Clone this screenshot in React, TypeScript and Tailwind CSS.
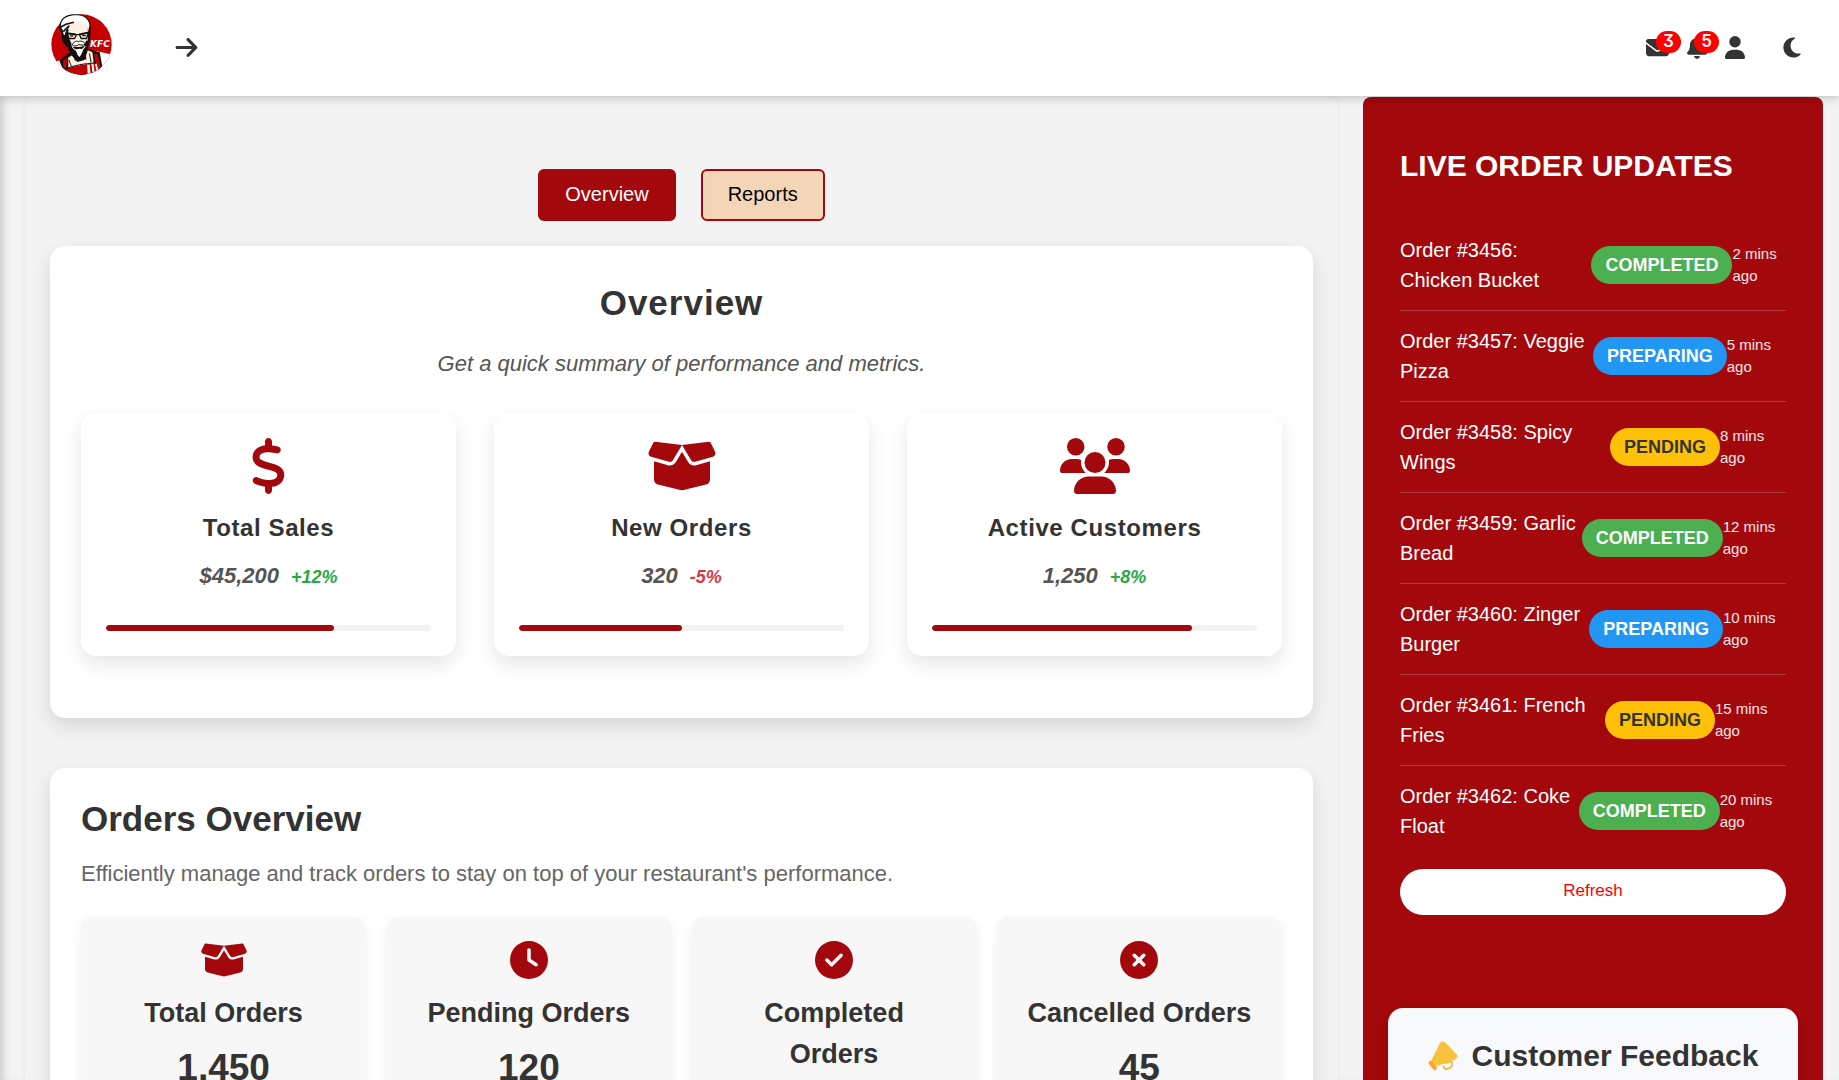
import type { ReactNode } from "react";
import {
  FaArrowRight,
  FaBell,
  FaBoxOpen,
  FaCircleCheck,
  FaCircleXmark,
  FaClock,
  FaDollarSign,
  FaEnvelope,
  FaMoon,
  FaUser,
  FaUsers,
} from "react-icons/fa6";

type Status = "Completed" | "Preparing" | "Pending";

const statusClass: Record<Status, string> = {
  Completed: "bg-[#4caf50] text-white",
  Preparing: "bg-[#2196f3] text-white",
  Pending: "bg-[#ffc107] text-[#333]",
};

const orders: { id: number; item: string; status: Status; ago: number }[] = [
  { id: 3456, item: "Chicken Bucket", status: "Completed", ago: 2 },
  { id: 3457, item: "Veggie Pizza", status: "Preparing", ago: 5 },
  { id: 3458, item: "Spicy Wings", status: "Pending", ago: 8 },
  { id: 3459, item: "Garlic Bread", status: "Completed", ago: 12 },
  { id: 3460, item: "Zinger Burger", status: "Preparing", ago: 10 },
  { id: 3461, item: "French Fries", status: "Pending", ago: 15 },
  { id: 3462, item: "Coke Float", status: "Completed", ago: 20 },
];

const metrics = [
  { title: "Total Sales", value: "$45,200", change: "+12%", progress: 70, icon: FaDollarSign, iconWidth: "w-[35px]" },
  { title: "New Orders", value: "320", change: "-5%", progress: 50, icon: FaBoxOpen, iconWidth: "w-[70px]" },
  { title: "Active Customers", value: "1,250", change: "+8%", progress: 80, icon: FaUsers, iconWidth: "w-[70px]" },
];

const orderStats = [
  { title: "Total Orders", value: "1,450", icon: FaBoxOpen, iconWidth: "w-12" },
  { title: "Pending Orders", value: "120", icon: FaClock, iconWidth: "w-[38px]" },
  { title: "Completed Orders", value: "1,285", icon: FaCircleCheck, iconWidth: "w-[38px]" },
  { title: "Cancelled Orders", value: "45", icon: FaCircleXmark, iconWidth: "w-[38px]" },
];

function Logo() {
  return (
    <svg viewBox="153 41 184 184" className="size-[61px]" role="img" aria-label="KFC">
      <clipPath id="logo-disc">
        <circle cx="245" cy="133" r="91" />
      </clipPath>
      <g clipPath="url(#logo-disc)">
        <rect x="153" y="41" width="184" height="184" fill="#c40000" />
        {/* background cut-outs beside the shoulders */}
        <path d="M153 190 L186 178 L190 214 L160 214 Z" fill="#fff" />
        <path d="M284 152 L337 163 V225 H306 L302 200 Z" fill="#fff" />
        {/* shoulders */}
        <path d="M178 182 L206 158 L262 146 L300 156 L309 206 L296 225 H190 L186 200 Z" fill="#111" />
        <path d="M190 182 L203 172 L198 206 L190 203 Z" fill="#c40000" />
        <path d="M205 172 L216 166 L232 186 L254 180 L264 150 L278 156 L282 190 L205 203 Z" fill="#fff0e2" />
        <path d="M207 180 L214 198 M269 160 L274 188" stroke="#111" strokeWidth="3" />
        <path d="M196 209 C220 198 256 192 287 191 L283 161 L294 163 L303 202 L292 225 H196 Z" fill="#c40000" />
        <path d="M196 207 C220 196 256 190 288 189" stroke="#111" strokeWidth="3" fill="none" />
        <path d="M262 194 L270 193 L272 225 H264 Z M275 192 L281 191 L286 225 H279 Z M286 192 L291 191 L297 218 H291 Z" fill="#fff" />
      </g>
      {/* head outline, hair and face */}
      <path d="M181 66 C188 46 210 40 232 42 C258 42 272 58 272 78 C273 100 272 118 266 136 C262 156 250 174 238 176 C222 172 206 160 204 142 C190 134 182 118 185 98 C177 88 177 76 181 66 Z" fill="#111" />
      <path d="M184 68 C190 50 212 44 232 45 C254 45 268 58 269 76 L265 94 L260 76 L214 66 L198 92 L194 106 C188 100 190 94 188 88 C182 82 182 76 184 68 Z" fill="#fff" />
      <path d="M206 72 C218 60 250 60 260 74 C267 90 266 116 260 134 C255 146 246 154 236 156 C224 152 214 142 211 128 L204 112 Z" fill="#fff0e2" />
      <path d="M180 82 L198 72 L222 66 M190 94 L208 76 M196 108 L204 88" stroke="#111" strokeWidth="5" fill="none" />
      <path d="M200 99 L228 103 M238 103 L268 97" stroke="#111" strokeWidth="6" fill="none" />
      <path d="M202 98 L207 115 H224 L230 103 L239 103 L244 115 H260 L266 97" stroke="#111" strokeWidth="4" fill="none" />
      <path d="M210 107 H220 M247 106 H258" stroke="#111" strokeWidth="4" />
      <path d="M202 112 L211 130 L212 150 M262 122 L256 138" stroke="#111" strokeWidth="7" fill="none" />
      <path d="M217 134 C222 124 232 120 236 125 C242 120 252 124 257 132 C250 136 242 134 237 133 C230 139 222 139 217 134 Z" fill="#fff" stroke="#111" strokeWidth="3" />
      <path d="M218 140 C230 142 246 140 254 136 C252 150 228 154 218 140 Z" fill="#111" />
      <path d="M228 149 C234 145 244 145 250 149 C247 158 243 167 239 171 C233 166 230 158 228 149 Z" fill="#fff" />
      <path d="M221 166 L238 172 L258 164 L260 178 L240 176 L225 182 Z" fill="#111" />
      <text
        x="271"
        y="141"
        fill="#fff"
        className="font-['DejaVu_Sans',sans-serif] text-[27px] font-bold italic"
      >
        KFC
      </text>
    </svg>
  );
}

function Megaphone() {
  return (
    <svg viewBox="211 871 91 91" className="size-[30px] shrink-0" aria-hidden="true">
      <path d="M261 938 L280 933 Q284 933 284 938 L283 947 Q282 951 278 952 L266 957 Q262 957 261 953 L257 946" fill="none" stroke="#fbb034" strokeWidth="5" strokeLinejoin="round" />
      <path d="M247 878 Q256 867 265 877 L298 912 Q304 920 295 926 L239 947 L221 930 Z" fill="#f9c23c" />
      <path d="M215 932 Q220 928 224 932 L237 948 Q239 955 235 959 Q231 961 227 957 L213 941 Q211 936 215 932 Z" fill="#ffa62b" />
    </svg>
  );
}

function Counter({ children }: { children: ReactNode }) {
  return (
    <span className="absolute -top-[5px] -right-3 flex h-[22px] w-[25px] items-center justify-center rounded-full bg-[#ff0000] font-['Inter',sans-serif] text-[17px] leading-none font-semibold text-white [font-feature-settings:'cv09']">
      {children}
    </span>
  );
}

export default function App() {
  return (
    <div className="flex h-screen flex-col overflow-hidden bg-[#f3f3f3] font-['Liberation_Sans',Arial,sans-serif] text-[#333]">
      <header className="relative z-10 flex h-24 shrink-0 items-center bg-white pr-[38px] pb-[2px] pl-[51px] shadow-[0_2px_10px_rgba(0,0,0,0.2)]">
        <a href="#home" className="-mt-[6px]">
          <Logo />
        </a>
        <button type="button" aria-label="Open menu" className="ml-[62px]">
          <FaArrowRight className="size-[25px]" />
        </button>
        <nav className="ml-auto flex items-center gap-[18px]">
          <button type="button" aria-label="Messages" className="relative">
            <FaEnvelope className="size-[23px]" />
            <Counter>3</Counter>
          </button>
          <button type="button" aria-label="Notifications" className="relative">
            <FaBell className="h-[23px] w-5" />
            <Counter>5</Counter>
          </button>
          <button type="button" aria-label="Account">
            <FaUser className="h-[23px] w-5" />
          </button>
          <button type="button" aria-label="Dark mode" className="ml-5">
            <FaMoon className="h-[23px] w-[18px]" />
          </button>
        </nav>
      </header>

      <div className="flex min-h-0 flex-1 items-start gap-[25px] overflow-y-auto pt-px pr-4 pl-[25px] shadow-[inset_8px_0_10px_-6px_rgba(0,0,0,0.2)] [scrollbar-width:none]">
        <main className="min-w-0 flex-1 rounded-lg bg-[#f3f3f3] px-[25px] pt-[72px] pb-[50px] shadow-[0_0_4px_rgba(0,0,0,0.06)]">
          <div className="flex justify-center gap-[25px]">
            <button
              type="button"
              className="h-[52px] rounded-md border-2 border-[#a3080c] bg-[#a3080c] px-[25px] pb-[2px] text-xl leading-6 text-white"
            >
              Overview
            </button>
            <button
              type="button"
              className="h-[52px] rounded-md border-2 border-[#a3080c] bg-[#f5d5b8] px-[25px] pb-[2px] text-xl leading-6 text-black"
            >
              Reports
            </button>
          </div>

          <section className="mt-[25px] rounded-[15px] bg-white px-[31px] pt-[31px] pb-[62px] shadow-[0_8px_20px_rgba(0,0,0,0.12)]">
            <h2 className="text-center text-[35px] leading-[52px] font-bold tracking-[1px]">Overview</h2>
            <p className="mt-[18px] text-center text-[22px] leading-[34px] text-[#555] italic">
              Get a quick summary of performance and metrics.
            </p>
            <div className="mt-8 grid grid-cols-3 gap-[38px]">
              {metrics.map(({ title, value, change, progress, icon: Icon, iconWidth }) => (
                <article
                  key={title}
                  className="flex flex-col items-center rounded-[15px] bg-white p-[25px] shadow-[0_8px_20px_rgba(0,0,0,0.1)]"
                >
                  <Icon className={`h-14 text-[#a3080c] ${iconWidth}`} />
                  <h3 className="mt-4 text-2xl leading-9 font-bold tracking-wide">{title}</h3>
                  <p className="mt-[13px] flex items-baseline gap-3 text-[22px] leading-[34px] font-bold text-[#555] italic">
                    {value}
                    <span
                      className={
                        change.startsWith("-") ? "text-lg text-[#dc3545]" : "text-lg text-[#28a745]"
                      }
                    >
                      {change}
                    </span>
                  </p>
                  <div className="mt-8 h-[6px] w-full overflow-hidden rounded-full bg-[#f2f2f2]">
                    <div className="h-full rounded-full bg-[#a3080c]" style={{ width: `${progress}%` }} />
                  </div>
                </article>
              ))}
            </div>
          </section>

          <section className="mt-[50px] rounded-[15px] bg-white p-[31px] shadow-[0_8px_20px_rgba(0,0,0,0.12)]">
            <h2 className="text-[35px] leading-10 font-bold">Orders Overview</h2>
            <p className="mt-[18px] text-[22px] leading-[34px] text-[#666]">
              Efficiently manage and track orders to stay on top of your restaurant's performance.
            </p>
            <div className="mt-[26px] grid grid-cols-4 gap-5">
              {orderStats.map(({ title, value, icon: Icon, iconWidth }) => (
                <article
                  key={title}
                  className="flex flex-col items-center rounded-xl bg-[#f7f7f7] px-7 py-6 text-center shadow-[0_4px_12px_rgba(0,0,0,0.06)]"
                >
                  <Icon className={`h-[38px] text-[#a3080c] ${iconWidth}`} />
                  <h3 className="mt-[14px] text-[27px] leading-[41px] font-bold">{title}</h3>
                  <p className="mt-2 text-[37px] leading-[52px] font-bold">{value}</p>
                </article>
              ))}
            </div>
          </section>
        </main>

        <aside className="w-[460px] shrink-0 rounded-lg bg-[#a3080c] p-[25px]">
          <section className="px-3 text-white">
            <h2 className="pt-[21px] text-[30px] leading-[46px] font-bold">LIVE ORDER UPDATES</h2>
            <ul className="mt-[31px]">
              {orders.map(({ id, item, status, ago }) => (
                <li
                  key={id}
                  className="flex items-center justify-between border-b border-white/20 py-[15px] last:border-b-0"
                >
                  <span className="text-xl leading-[30px]">
                    Order #{id}: {item}
                  </span>
                  <span
                    className={`rounded-full px-[14px] py-[6px] text-lg leading-[26px] font-bold uppercase ${statusClass[status]}`}
                  >
                    {status}
                  </span>
                  <time className="text-[15px] leading-[22px] text-white/90">{ago} mins ago</time>
                </li>
              ))}
            </ul>
            <button
              type="button"
              className="mt-[13px] h-[46px] w-full rounded-full bg-white pb-[2px] text-[17px] leading-6 text-[#ff0000]"
            >
              Refresh
            </button>
          </section>

          <section className="mt-[93px] rounded-[15px] bg-[#f8f9fb] p-[25px] shadow-[0_4px_12px_rgba(0,0,0,0.15)]">
            <h2 className="flex items-center justify-center gap-[14px] text-[30px] leading-[46px] font-bold whitespace-nowrap">
              <Megaphone />
              Customer Feedback
            </h2>
          </section>
        </aside>
      </div>
    </div>
  );
}
